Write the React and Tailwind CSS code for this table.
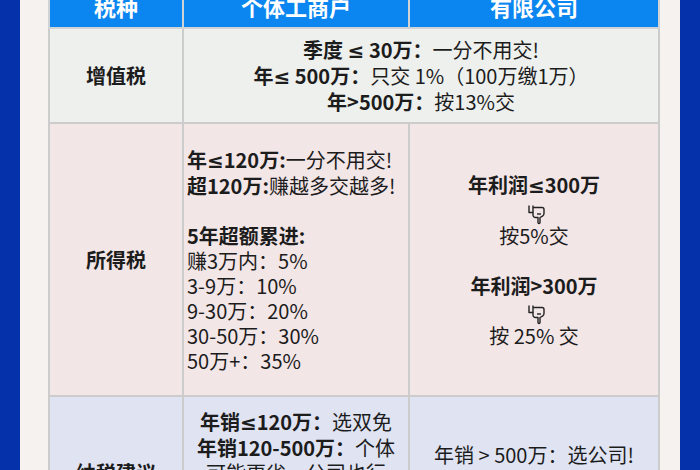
import React from "react";

const font = { fontFamily: '"Noto Sans CJK SC", "Noto Sans", sans-serif' };

// ≤ drawn with a Latin font so it gets the flat bar, as in the picture
const Le = () => <span style={{ fontFamily: '"Noto Sans", "DejaVu Sans", sans-serif' }}>≤</span>;

const Hand = () => (
  <div className="h-[25px] flex items-end justify-center">
    <svg width="18" height="21" viewBox="0 0 18 20" fill="none" stroke="#222" strokeWidth="1.4" strokeLinejoin="round" className="ml-[6px] -mb-[2px]">
      <path d="M1 1v7h4V1" />
      <path d="M5 3h9a2 2 0 0 1 2 2v4a3 3 0 0 1-1.5 2.6L12 13v5a1 1 0 0 1-2 0V13H7.5A2.5 2.5 0 0 1 5 10.5V8" />
      <path d="M9 9.5h4" />
    </svg>
  </div>
);

const App = () => {
  return (
    <div className="w-[700px] h-[470px] overflow-hidden bg-[#0531aa] px-[20px]" style={font}>
      <div className="h-full bg-[#f5f2ef] pl-[28px] pr-[22px] overflow-hidden">
        <table className="table-fixed border-collapse w-[610px] -mt-[14px] text-[#1c1c1c]">
          <colgroup>
            <col className="w-[134px]" />
            <col className="w-[226px]" />
            <col className="w-[250px]" />
          </colgroup>
          <thead>
            <tr className="h-[42px] bg-[#0b86f0] text-white text-[22px] font-bold">
              <th className="border-2 border-[#cfd3d6] border-t-0">税种</th>
              <th className="border-2 border-[#cfd3d6] border-t-0">个体工商户</th>
              <th className="border-2 border-[#cfd3d6] border-t-0">有限公司</th>
            </tr>
          </thead>
          <tbody className="text-[20px] leading-[25px]">
            <tr className="h-[95px] bg-[#eef0ee]">
              <td className="border-2 border-[#cccccc] text-center font-bold">增值税</td>
              <td colSpan={2} className="border-2 border-[#cccccc] text-center">
                <div><b>季度 <Le /> 30万：</b>一分不用交!</div>
                <div><b>年<Le /> 500万：</b>只交 1%（100万缴1万）</div>
                <div><b>年&gt;500万：</b>按13%交</div>
              </td>
            </tr>
            <tr className="h-[273px] bg-[#f3e6e7]">
              <td className="border-2 border-[#cccccc] text-center font-bold">所得税</td>
              <td className="border-2 border-[#cccccc] pl-[3px] align-middle whitespace-nowrap">
                <div><b>年<Le />120万:</b>一分不用交!</div>
                <div><b>超120万:</b>赚越多交越多!</div>
                <div className="h-[25px]" />
                <div className="font-bold">5年超额累进:</div>
                <div>赚3万内：5%</div>
                <div>3-9万：10%</div>
                <div>9-30万：20%</div>
                <div>30-50万：30%</div>
                <div>50万+：35%</div>
              </td>
              <td className="border-2 border-[#cccccc] text-center">
                <div className="font-bold">年利润<Le />300万</div>
                <Hand />
                <div>按5%交</div>
                <div className="h-[25px]" />
                <div className="font-bold">年利润&gt;300万</div>
                <Hand />
                <div>按 25% 交</div>
              </td>
            </tr>
            <tr className="bg-[#dfe3f2]">
              <td className="border-2 border-[#cccccc] text-center font-bold">纳税建议</td>
              <td className="border-2 border-[#cccccc] text-center py-[12px] whitespace-nowrap">
                <div><b>年销<Le />120万：</b>选双免</div>
                <div><b>年销120-500万：</b>个体</div>
                <div>可能更省，公司也行</div>
                <div>看利润和发展规划</div>
                <div>灵活选择</div>
              </td>
              <td className="border-2 border-[#cccccc] text-center pb-[10px]">
                <div>年销 &gt; 500万：选公司!</div>
                <div>想以后融资选公司!</div>
              </td>
            </tr>
          </tbody>
        </table>
      </div>
    </div>
  );
};

export default App;
